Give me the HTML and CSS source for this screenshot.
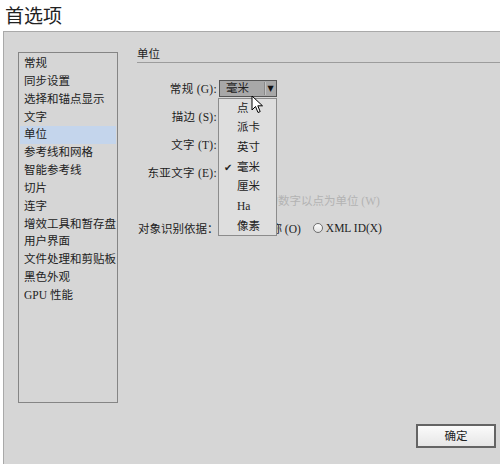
FILE: index.html
```html
<!DOCTYPE html>
<html lang="zh-CN">
<head>
	<meta charset="UTF-8">
	<title>首选项</title>
	<link rel="stylesheet" href="styles.css">
</head>
<body>
<div class="title">首选项</div>
<div class="dialog">
	<!-- 左侧分类列表 -->
	<div class="side">
		<ul class="cats">
			<li>常规</li>
			<li>同步设置</li>
			<li>选择和锚点显示</li>
			<li>文字</li>
			<li class="on">单位</li>
			<li>参考线和网格</li>
			<li>智能参考线</li>
			<li>切片</li>
			<li>连字</li>
			<li>增效工具和暂存盘</li>
			<li>用户界面</li>
			<li>文件处理和剪贴板</li>
			<li>黑色外观</li>
			<li>GPU 性能</li>
		</ul>
	</div>
	<!-- 右侧设置内容 -->
	<div class="main">
		<h2 class="group">单位</h2>
		<div class="form">
			<div class="row">
				<label class="lab">常规 (G):</label>
				<div class="field">
					<div class="select">
						<span class="val">毫米</span>
						<span class="arr">&#9660;</span>
					</div>
					<ul class="menu">
						<li>点</li>
						<li>派卡</li>
						<li>英寸</li>
						<li class="checked">毫米</li>
						<li>厘米</li>
						<li>Ha</li>
						<li>像素</li>
					</ul>
					<svg class="cursor" width="13" height="19" viewBox="0 0 13 19">
						<path d="M1 1 L1 15 L4.5 11.5 L7 17.5 L9.2 16.6 L6.8 10.8 L11.5 10.8 Z" fill="#fff" stroke="#000" stroke-width="1" stroke-linejoin="round"/>
					</svg>
				</div>
			</div>
			<div class="row">
				<label class="lab">描边 (S):</label>
				<div class="field"></div>
			</div>
			<div class="row">
				<label class="lab">文字 (T):</label>
				<div class="field"></div>
			</div>
			<div class="row">
				<label class="lab">东亚文字 (E):</label>
				<div class="field"></div>
			</div>
			<div class="row">
				<span class="lab"></span>
				<div class="field off">
					<span class="box"></span>
					<span>无单位的数字以点为单位 (W)</span>
				</div>
			</div>
			<div class="row">
				<span class="wide">对象识别依据：</span>
				<span class="radio"></span><span class="rtxt">对象名称 (O)</span>
				<span class="radio"></span><span class="rtxt">XML ID(X)</span>
			</div>
		</div>
		<div class="foot">
			<a href="javascript:;" class="btn">确定</a>
		</div>
	</div>
</div>
</body>
</html>
```

FILE: styles.css
```css
body,
ul,
h2 {
	margin: 0;
}

ul {
	padding: 0;
	list-style: none;
}

body {
	width: 500px;
	height: 464px;
	overflow: hidden;
	background: #fff;
	font-family: "Liberation Serif", "Noto Sans CJK SC", serif;
	color: #222;
}

.title {
	height: 31px;
	padding-left: 5px;
	font: 19px/29px "Noto Sans CJK SC", sans-serif;
	color: #222;
}

/* 对话框主体 */
.dialog {
	display: flex;
	height: 433px;
	margin-left: 3px;
	border-top: 1px solid #a9a9a9;
	border-left: 1px solid #a9a9a9;
	background: #d6d6d6;
}

.side {
	padding: 20px 0 0 14px;
}

.cats {
	box-sizing: border-box;
	width: 100px;
	height: 351px;
	padding: 2px 1px 0;
	border: 1px solid #858585;
	font-size: 11.5px;
	line-height: 17.85px;
}

.cats li {
	padding-left: 4px;
}

.cats .on {
	background: #c4d5ec;
}

.main {
	flex: 1;
	display: flex;
	flex-direction: column;
	padding: 16px 0 0 19px;
}

.group {
	height: 14px;
	border-bottom: 1px solid #9c9c9c;
	font-weight: normal;
	font-size: 11.5px;
	line-height: 12px;
}

.form {
	margin-top: 11px;
	font-size: 11.5px;
}

.row {
	display: flex;
	align-items: center;
	height: 28px;
}

.lab {
	width: 80px;
	text-align: right;
	letter-spacing: .3px;
}

.field {
	position: relative;
	display: flex;
	align-items: center;
	margin-left: 2px;
}

/* 收起状态的下拉框 */
.select {
	box-sizing: border-box;
	display: flex;
	align-items: center;
	width: 58px;
	height: 17px;
	border: 1px solid #555;
	background: #a8a8a8;
}

.val {
	width: 38px;
	padding-left: 6px;
	border-right: 1px solid #8a8a8a;
	box-shadow: 1px 0 0 #c4c4c4;
	line-height: 13px;
}

.arr {
	flex: 1;
	text-align: center;
	font: 8px/13px "DejaVu Sans", sans-serif;
	color: #111;
}

/* 展开的单位列表 */
.menu {
	position: absolute;
	left: -1px;
	top: 18px;
	z-index: 5;
	box-sizing: border-box;
	width: 59px;
	height: 138px;
	border: 1px solid #8c8c8c;
	background: #dedede;
}

.menu li {
	height: 19.7px;
	padding-left: 18px;
	line-height: 19.7px;
}

.menu .checked:before {
	content: "\2714";
	position: absolute;
	left: 5px;
	font: 10px/19.7px "DejaVu Sans", sans-serif;
	color: #222;
}

.cursor {
	position: absolute;
	left: 32px;
	top: 15px;
	z-index: 6;
}

.off {
	color: #b3b3b3;
}

.box {
	box-sizing: border-box;
	width: 10px;
	height: 10px;
	margin-right: 3px;
	border: 1px solid #bcbcbc;
}

.wide {
	width: 85px;
	padding-left: 1px;
}

.radio {
	box-sizing: border-box;
	width: 10px;
	height: 10px;
	margin-right: 3px;
	border: 1px solid #6e6e6e;
	border-radius: 50%;
	background: linear-gradient(#fdfdfd, #e2e2e2);
}

.rtxt {
	margin-right: 12px;
}

.foot {
	display: flex;
	justify-content: flex-end;
	margin-top: auto;
	padding: 0 4px 17px 0;
}

.btn {
	box-sizing: border-box;
	width: 80px;
	height: 24px;
	border: 2px solid #646464;
	background: linear-gradient(#fbfbfb, #e6e6e6);
	font-size: 11.5px;
	line-height: 20px;
	text-align: center;
	color: #222;
	text-decoration: none;
}
```
